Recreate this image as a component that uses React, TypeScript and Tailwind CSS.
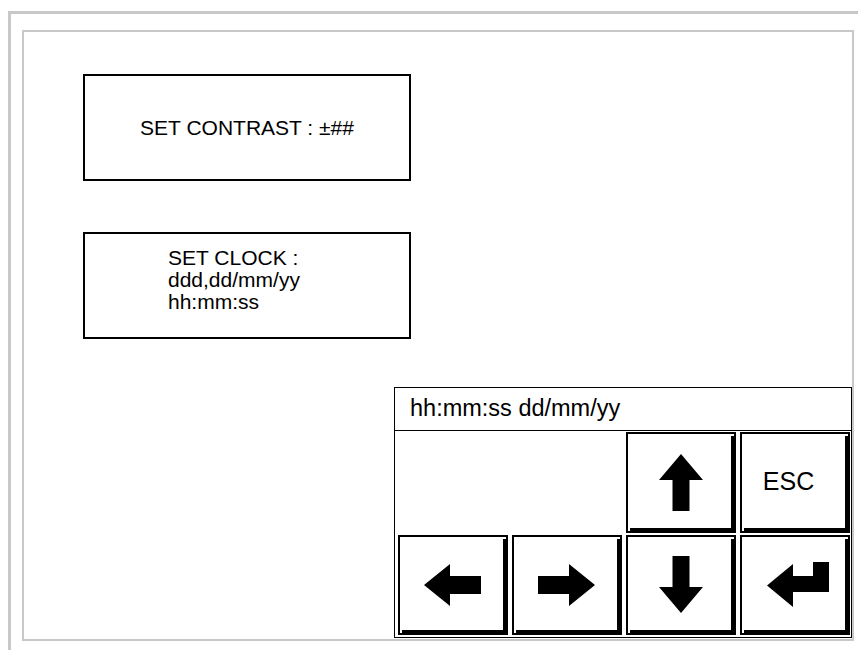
import React from "react";

const font = { fontFamily: '"Liberation Sans", Arial, Helvetica, sans-serif' };

const Key: React.FC<{ children?: React.ReactNode }> = ({ children }) => (
  <div className="flex h-full w-full border-2 border-black bg-white">
    <div className="mt-[2px] ml-[2px] flex flex-1 items-center justify-center border-r-[3px] border-b-[3px] border-black">
      {children}
    </div>
  </div>
);

const ArrowUp = () => (
  <svg width="44" height="57" viewBox="0 0 44 57">
    <polygon points="22,0 44,26 30.5,26 30.5,57 13.5,57 13.5,26 0,26" fill="#000" />
  </svg>
);

const ArrowDown = () => (
  <svg width="44" height="57" viewBox="0 0 44 57">
    <polygon points="22,57 44,31 30.5,31 30.5,0 13.5,0 13.5,31 0,31" fill="#000" />
  </svg>
);

const ArrowLeft = () => (
  <svg width="57" height="42" viewBox="0 0 57 42">
    <polygon points="0,21 26,0 26,12 57,12 57,30 26,30 26,42" fill="#000" />
  </svg>
);

const ArrowRight = () => (
  <svg width="57" height="42" viewBox="0 0 57 42">
    <polygon points="57,21 31,0 31,12 0,12 0,30 31,30 31,42" fill="#000" />
  </svg>
);

const ArrowEnter = () => (
  <svg width="62" height="45" viewBox="0 0 62 45">
    <polygon points="0,23.5 26,2 26,14 46,14 46,0 62,0 62,30 26,30 26,45" fill="#000" />
  </svg>
);

export default function App() {
  return (
    <div className="h-[650px] w-[858px] overflow-hidden bg-white text-black" style={font}>
      {/* outer frame, runs off the page */}
      <div className="ml-[8px] mt-[11px] h-[700px] w-[900px] border-l-[3px] border-t-[3px] border-[#c8c8c8]">
        {/* inner frame */}
        <div className="ml-[11px] mt-[16px] flex h-[611px] w-[832px] flex-col border-2 border-[#c8c8c8]">
          {/* contrast */}
          <div className="ml-[59px] mt-[42px] flex h-[107px] w-[328px] items-center justify-center border-2 border-black text-[21px]">
            SET CONTRAST : ±##
          </div>

          {/* clock */}
          <div className="ml-[59px] mt-[51px] h-[107px] w-[328px] border-2 border-black pl-[83px] pt-[13px] text-[21px] leading-[22px]">
            <div>SET CLOCK :</div>
            <div>ddd,dd/mm/yy</div>
            <div>hh:mm:ss</div>
          </div>

          {/* keypad panel */}
          <div className="ml-[370px] mt-[48px] flex h-[251px] w-[458px] flex-col border border-black">
            <div className="flex h-[43px] items-center border-b border-black pl-[15px] text-[23.5px]">
              hh:mm:ss dd/mm/yy
            </div>
            <div className="grid flex-1 grid-cols-[110px_110px_110px_110px] grid-rows-[101px_100px] gap-x-[4px] gap-y-[2px] pl-[3px] pt-[1px]">
              <div />
              <div />
              <Key>
                <ArrowUp />
              </Key>
              <Key>
                <span className="mr-[12px] text-[25px]">ESC</span>
              </Key>
              <Key>
                <ArrowLeft />
              </Key>
              <Key>
                <ArrowRight />
              </Key>
              <Key>
                <ArrowDown />
              </Key>
              <Key>
                <span className="ml-[6px] flex">
                  <ArrowEnter />
                </span>
              </Key>
            </div>
          </div>
        </div>
      </div>
    </div>
  );
}
